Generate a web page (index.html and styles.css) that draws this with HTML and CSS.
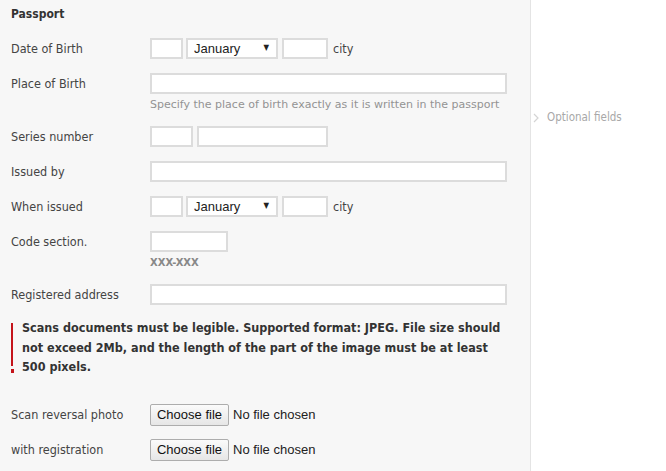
FILE: index.html
```html
<!DOCTYPE html>
<html>
<head>
<meta charset="utf-8">
<link rel="stylesheet" href="styles.css">
</head>
<body>
<div class="page">
  <main class="panel">
    <h2 class="title">Passport</h2>
    <div class="form">
      <label class="lbl">Date of Birth</label>
      <div class="ctl inline">
        <input class="inp w-day" type="text">
        <div class="sel-wrap"><select class="sel"><option>January</option></select><span class="arrow">▼</span></div>
        <input class="inp w-year" type="text">
        <span class="unit">city</span>
      </div>

      <label class="lbl">Place of Birth</label>
      <div class="ctl">
        <input class="inp w-full" type="text">
        <div class="hint">Specify the place of birth exactly as it is written in the passport</div>
      </div>

      <label class="lbl">Series number</label>
      <div class="ctl inline">
        <input class="inp w-series" type="text">
        <input class="inp w-number" type="text">
      </div>

      <label class="lbl">Issued by</label>
      <div class="ctl">
        <input class="inp w-full" type="text">
      </div>

      <label class="lbl">When issued</label>
      <div class="ctl inline">
        <input class="inp w-day" type="text">
        <div class="sel-wrap"><select class="sel"><option>January</option></select><span class="arrow">▼</span></div>
        <input class="inp w-year" type="text">
        <span class="unit">city</span>
      </div>

      <label class="lbl">Code section.</label>
      <div class="ctl">
        <input class="inp w-code" type="text">
        <div class="hint mask">XXX-XXX</div>
      </div>

      <label class="lbl">Registered address</label>
      <div class="ctl">
        <input class="inp w-full" type="text">
      </div>
    </div>

    <div class="notice">
      <div class="mark"><span class="bar"></span><span class="dot"></span></div>
      <p class="notice-text">Scans documents must be legible. Supported format: JPEG. File size should not exceed 2Mb, and the length of the part of the image must be at least 500 pixels.</p>
    </div>

    <div class="form files">
      <span class="lbl">Scan reversal photo</span>
      <label class="file-pick"><input class="file-input" type="file"><span class="file-btn">Choose file</span><span class="file-name">No file chosen</span></label>
      <span class="lbl">with registration</span>
      <label class="file-pick"><input class="file-input" type="file"><span class="file-btn">Choose file</span><span class="file-name">No file chosen</span></label>
    </div>
  </main>
  <aside class="side">
    <div class="optional">
      <svg class="chev" width="7" height="10" viewBox="0 0 7 10"><path d="M1 1 L5 5 L1 9" fill="none" stroke="#d4d4d4" stroke-width="1.2"/></svg>
      <span>Optional fields</span>
    </div>
  </aside>
</div>
</body>
</html>
```
FILE: styles.css
```css
html, body {
  margin: 0;
  padding: 0;
  height: 100%;
  background: #ffffff;
}
.page {
  display: flex;
  height: 471px;
  overflow: hidden;
}
.panel {
  width: 519px;
  flex: none;
  background: #f7f7f7;
  border-right: 1px solid #e4e4e4;
  padding: 6px 0 0 11px;
  font-family: "DejaVu Sans Condensed", "DejaVu Sans", sans-serif;
  color: #444;
}
.title {
  margin: 0 0 16px 0;
  font-size: 12px;
  line-height: 16px;
  font-weight: bold;
  color: #333;
}
.form {
  display: grid;
  grid-template-columns: 139px 1fr;
  row-gap: 14px;
  align-items: start;
}
.lbl {
  font-size: 12.5px;
  line-height: 21px;
  color: #444;
}
.ctl.inline {
  display: flex;
  align-items: center;
  gap: 3px;
}
.inp {
  box-sizing: border-box;
  height: 21px;
  margin: 0;
  border: 2px solid #dcdcdc;
  background: #fff;
  padding: 0 4px;
  display: block;
}
.w-day { width: 33px; }
.w-year { width: 46px; margin-left: 1px; }
.w-full { width: 357px; }
.w-series { width: 43px; }
.w-number { width: 131px; margin-left: 1px; }
.w-code { width: 78px; }
.sel-wrap {
  position: relative;
  width: 92px;
  height: 21px;
}
.sel {
  -webkit-appearance: none;
  appearance: none;
  box-sizing: border-box;
  width: 92px;
  height: 21px;
  margin: 0;
  border: 2px solid #dcdcdc;
  background: #fff;
  padding: 0 0 0 6px;
  font-family: "Liberation Sans", Arial, sans-serif;
  font-size: 13px;
  color: #222;
}
.arrow {
  position: absolute;
  right: 9px;
  top: 5px;
  font-size: 8px;
  line-height: 10px;
  color: #222;
  pointer-events: none;
}
.unit {
  font-size: 12.5px;
  color: #444;
  margin-left: 2px;
}
.hint {
  margin-top: 5px;
  margin-bottom: 1px;
  font-family: "DejaVu Sans", sans-serif;
  font-size: 11px;
  line-height: 12px;
  color: #939393;
}
.mask {
  margin-top: 5px;
  font-weight: bold;
  color: #888;
  font-size: 10px;
}
.notice {
  display: flex;
  gap: 9px;
  margin-top: 13px;
  width: 500px;
}
.mark {
  display: flex;
  flex-direction: column;
  align-items: center;
  width: 2px;
  padding-top: 5px;
  gap: 3px;
}
.bar {
  width: 2px;
  height: 43px;
  background: #c4141b;
}
.dot {
  width: 3px;
  height: 4px;
  background: #c4141b;
}
.notice-text {
  margin: 0;
  font-size: 12.5px;
  line-height: 19.5px;
  font-weight: bold;
  color: #333;
}
.files {
  margin-top: 27px;
  row-gap: 13px;
}
.files .lbl { line-height: 22px; }
.file-pick {
  display: flex;
  align-items: center;
  gap: 4px;
  height: 22px;
  font-family: "Liberation Sans", Arial, sans-serif;
  font-size: 13px;
  color: #222;
}
.file-input {
  display: none;
}
.file-btn {
  box-sizing: border-box;
  width: 79px;
  height: 22px;
  line-height: 20px;
  text-align: center;
  color: #111;
  border: 1px solid #adadad;
  border-radius: 2px;
  background: linear-gradient(#fbfbfb, #e6e6e6);
}
.file-name {
  color: #222;
}
.side {
  flex: 1;
  padding-top: 110px;
}
.optional {
  display: flex;
  align-items: center;
  gap: 7px;
  padding-left: 2px;
  font-family: "DejaVu Sans Condensed", "DejaVu Sans", sans-serif;
  font-size: 11.5px;
  line-height: 15px;
  color: #a8a8a8;
}
.chev { display: block; }
```
